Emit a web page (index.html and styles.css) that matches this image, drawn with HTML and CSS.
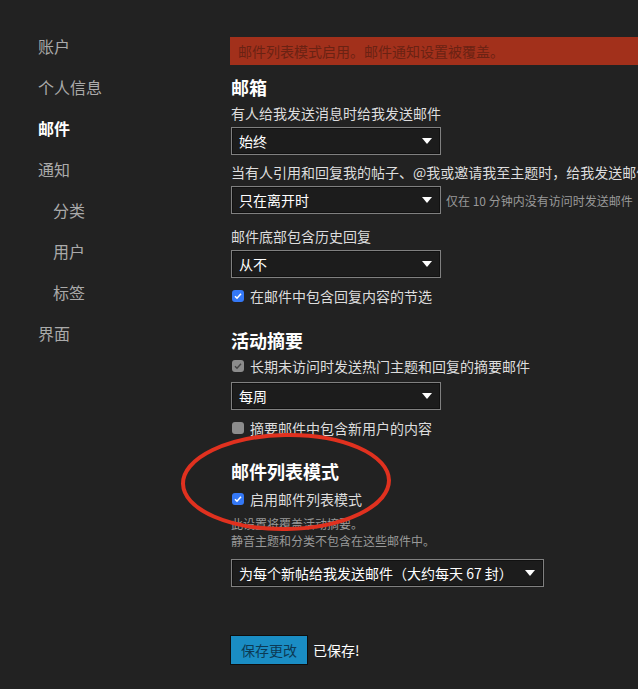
FILE: index.html
```html
<!DOCTYPE html>
<html>
<head>
    <title>邮件设置</title>
    <meta charset="UTF-8">
    <link rel="stylesheet" href="styles.css">
</head>
<body>
    <div class="page">
        <ul class="nav">
            <li>账户</li>
            <li>个人信息</li>
            <li class="active">邮件</li>
            <li>通知</li>
            <li class="sub">分类</li>
            <li class="sub">用户</li>
            <li class="sub">标签</li>
            <li>界面</li>
        </ul>

        <div class="main">
            <div class="alert">邮件列表模式启用。邮件通知设置被覆盖。</div>

            <h2 class="first">邮箱</h2>
            <div class="label">有人给我发送消息时给我发送邮件</div>
            <div class="select sel-1">
                <span>始终</span>
                <svg width="10" height="6" viewBox="0 0 10 6"><path d="M0 0h10L5 6z" fill="#fff"/></svg>
            </div>

            <div class="label">当有人引用和回复我的帖子、@我或邀请我至主题时，给我发送邮件</div>
            <div class="row sel-2">
                <div class="select">
                    <span>只在离开时</span>
                    <svg width="10" height="6" viewBox="0 0 10 6"><path d="M0 0h10L5 6z" fill="#fff"/></svg>
                </div>
                <span class="hint">仅在 10 分钟内没有访问时发送邮件</span>
            </div>

            <div class="label">邮件底部包含历史回复</div>
            <div class="select">
                <span>从不</span>
                <svg width="10" height="6" viewBox="0 0 10 6"><path d="M0 0h10L5 6z" fill="#fff"/></svg>
            </div>

            <div class="check check-1">
                <span class="box on"><svg width="10" height="10" viewBox="0 0 10 10"><path d="M2 5.2l2 2 4-4.4" stroke="#fff" stroke-width="1.6" fill="none"/></svg></span>
                在邮件中包含回复内容的节选
            </div>

            <h2>活动摘要</h2>
            <div class="check">
                <span class="box dis"><svg width="10" height="10" viewBox="0 0 10 10"><path d="M2 5.2l2 2 4-4.4" stroke="#444" stroke-width="1.4" fill="none"/></svg></span>
                长期未访问时发送热门主题和回复的摘要邮件
            </div>
            <div class="select sel-digest">
                <span>每周</span>
                <svg width="10" height="6" viewBox="0 0 10 6"><path d="M0 0h10L5 6z" fill="#fff"/></svg>
            </div>
            <div class="check check-1">
                <span class="box dis"></span>
                摘要邮件中包含新用户的内容
            </div>

            <h2 class="mlm">邮件列表模式</h2>
            <div class="check">
                <span class="box on"><svg width="10" height="10" viewBox="0 0 10 10"><path d="M2 5.2l2 2 4-4.4" stroke="#fff" stroke-width="1.6" fill="none"/></svg></span>
                启用邮件列表模式
            </div>
            <div class="desc">
                此设置将覆盖活动摘要。<br>
                静音主题和分类不包含在这些邮件中。
            </div>
            <div class="select wide">
                <span>为每个新帖给我发送邮件（大约每天 67 封）</span>
                <svg width="10" height="6" viewBox="0 0 10 6"><path d="M0 0h10L5 6z" fill="#fff"/></svg>
            </div>

            <div class="save">
                <button>保存更改</button>
                <span class="saved">已保存!</span>
            </div>
        </div>
    </div>

    <!-- hand drawn mark over the mailing list section -->
    <svg class="circle" width="216" height="104" viewBox="0 0 216 104">
        <ellipse cx="108" cy="52" rx="103" ry="47" fill="none" stroke="#e0311f" stroke-width="4" transform="rotate(-1 108 52)"/>
    </svg>
</body>
</html>
```

FILE: styles.css
```css
html, body {
    margin: 0;
    background: #222;
    overflow: hidden;
}
body {
    font-family: "Noto Sans CJK SC", "Noto Sans", sans-serif;
    color: #ddd;
    position: relative;
    height: 689px;
}
.page {
    display: flex;
}
.nav {
    list-style: none;
    margin: 0;
    padding: 26px 0 0 38px;
    width: 193px;
    flex-shrink: 0;
}
.nav li {
    font-size: 16px;
    line-height: 41px;
    color: #aaa;
}
.nav li.sub {
    padding-left: 15px;
}
.nav li.active {
    color: #fff;
    font-weight: bold;
}
.main {
    flex: 1;
    min-width: 0;
    padding-top: 37px;
    white-space: nowrap;
}
.alert {
    background: #a2301b;
    color: #6a2213;
    font-size: 14px;
    line-height: 28px;
    padding-left: 8px;
    margin-left: -1px;
}
h2 {
    font-size: 18px;
    line-height: 24px;
    color: #fff;
    margin: 22px 0 4px;
}
h2.first {
    margin-top: 10px;
}
h2.mlm {
    margin-top: 21px;
    margin-bottom: 6px;
}
.label {
    font-size: 14px;
    line-height: 20px;
    color: #ddd;
    margin-bottom: 4px;
}
.select {
    width: 210px;
    height: 28px;
    box-sizing: border-box;
    border: 1px solid #808080;
    box-shadow: inset 0 0 0 1px #111;
    background: #1c1c1c;
    display: flex;
    align-items: center;
    justify-content: space-between;
    padding: 0 8px 0 7px;
    font-size: 14px;
    color: #fff;
}
.select.wide {
    width: 313px;
    margin-top: 10px;
}
.sel-1 {
    margin-bottom: 7px;
}
.row {
    display: flex;
    align-items: center;
    gap: 5px;
    margin-bottom: 12px;
}
.row .select {
    flex-shrink: 0;
}
.hint {
    font-size: 12px;
    color: #999;
}
.check {
    display: flex;
    align-items: center;
    gap: 6px;
    font-size: 14px;
    line-height: 20px;
    color: #ddd;
    margin-left: 1px;
}
.check-1 {
    margin-top: 8px;
}
.sel-digest {
    margin-top: 6px;
}
.box {
    width: 12px;
    height: 12px;
    border-radius: 3px;
    display: flex;
    align-items: center;
    justify-content: center;
    flex-shrink: 0;
}
.box.on {
    background: #3478f6;
}
.box.dis {
    background: #8c8c8c;
}
.desc {
    font-size: 12px;
    line-height: 17px;
    color: #999;
    margin-top: 6px;
}
.save {
    display: flex;
    align-items: center;
    gap: 5px;
    margin-top: 48px;
}
button {
    font-family: inherit;
    background: #1a8dc4;
    color: #0c3a55;
    font-size: 14px;
    border: 1px solid #0e0e0e;
    padding: 0 10px;
    height: 30px;
    margin-left: -1px;
}
.saved {
    font-size: 14px;
    color: #fff;
}
.circle {
    position: absolute;
    left: 178px;
    top: 430px;
}
```
